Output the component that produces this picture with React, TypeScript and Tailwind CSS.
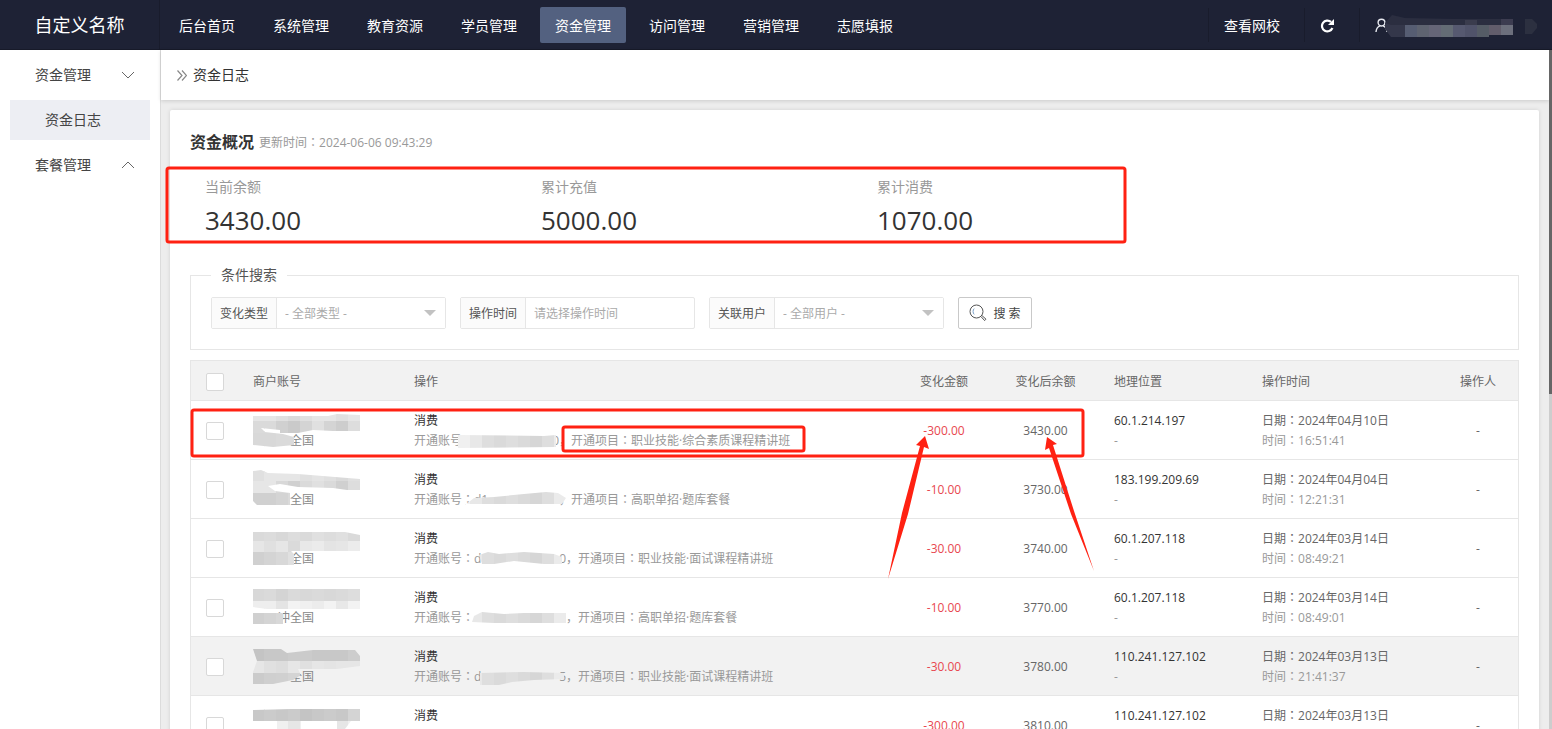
import { useState } from "react";

interface Band {
    y: number;
    h: number;
    colors: string[];
}

interface LogRow {
    id: number;
    name: string;
    head: string;
    tail: string;
    project: string;
    wide: boolean;
    amount: string;
    balance: string;
    ip: string;
    date: string;
    time: string;
    active?: boolean;
    shape: string;
    bands: Band[];
    accountShape: string;
}

const NAV_ITEMS = ["后台首页", "系统管理", "教育资源", "学员管理", "资金管理", "访问管理", "营销管理", "志愿填报"];

const STATS = [
    { label: "当前余额", value: "3430.00" },
    { label: "累计充值", value: "5000.00" },
    { label: "累计消费", value: "1070.00" },
];

const ROWS: LogRow[] = [
    {
        id: 1,
        name: "全国",
        head: "",
        tail: "0",
        project: "职业技能·综合素质课程精讲班",
        wide: false,
        amount: "-300.00",
        balance: "3430.00",
        ip: "60.1.214.197",
        date: "2024年04月10日",
        time: "16:51:41",
        shape: "M0 5L40 5L75 5L84 3L107 4V20L80 20L60 19L45 22L27 22V19L8 17L12 21L30 23L41 26V34L20 36L0 34Z",
        bands: [
            { y: 0, h: 10, colors: ["#e6e6e6", "#e6e6e6", "#e0e0e0", "#dadada", "#e0e0e0", "#e6e6e6", "#e6e6e6", "#e0e0e0", "#e6e6e6"] },
            { y: 10, h: 12, colors: ["#dadada", "#dadada", "#d0d0d0", "#cacaca", "#d4d4d4", "#e0e0e0", "#d4d4d4", "#cdcdcd", "#dddddd"] },
            { y: 22, h: 14, colors: ["#d8d8d8", "#d8d8d8", "#dadada", "#dadada"] },
        ],
        accountShape: "M-16 4L70 5L82 4V16L-16 17Z",
    },
    {
        id: 2,
        name: "全国",
        head: "d1",
        tail: "",
        project: "高职单招·题库套餐",
        wide: false,
        amount: "-10.00",
        balance: "3730.00",
        ip: "183.199.209.69",
        date: "2024年04月04日",
        time: "12:21:31",
        shape: "M0 1L8 0L15 3L45 4L107 9V20L94 20L80 18L45 17L27 14L15 16L22 21L37 23V35H4L0 31Z",
        bands: [
            { y: 0, h: 11, colors: ["#e0e0e0", "#e6e6e6", "#e6e6e6", "#e6e6e6", "#e0e0e0", "#e4e4e4", "#e0e0e0", "#dadada", "#e0e0e0"] },
            { y: 11, h: 12, colors: ["#e6e6e6", "#e6e6e6", "#d8d8d8", "#d0d0d0", "#dadada", "#e0e0e0", "#dadada", "#d0d0d0", "#dddddd"] },
            { y: 23, h: 13, colors: ["#d0d0d0", "#d0d0d0", "#d4d4d4", "#dadada"] },
        ],
        accountShape: "M-9 15L0 8L20 7L50 4L72 2L84 3L92 8L88 14H-9Z",
    },
    {
        id: 3,
        name: "全国",
        head: "d",
        tail: "0",
        project: "职业技能·面试课程精讲班",
        wide: true,
        amount: "-30.00",
        balance: "3740.00",
        ip: "60.1.207.118",
        date: "2024年03月14日",
        time: "08:49:21",
        shape: "M0 3H92L107 6V22H38L41 25V36H0Z",
        bands: [
            { y: 0, h: 12, colors: ["#dadada", "#dcdcdc", "#d8d8d8", "#dddddd", "#dadada", "#e0e0e0", "#dddddd", "#e0e0e0", "#dadada"] },
            { y: 12, h: 11, colors: ["#e6e6e6", "#e0e0e0", "#e6e6e6", "#dadada", "#e8e8e8", "#ebebeb", "#e4e4e4", "#e6e6e6", "#ececec"] },
            { y: 23, h: 14, colors: ["#d0d0d0", "#d4d4d4", "#d8d8d8", "#e0e0e0"] },
        ],
        accountShape: "M5 6L14 3L25 5L50 3L80 5L88 8V15H70L40 12L20 15H8Z",
    },
    {
        id: 4,
        name: "冲全国",
        head: "",
        tail: "",
        project: "高职单招·题库套餐",
        wide: true,
        amount: "-10.00",
        balance: "3770.00",
        ip: "60.1.207.118",
        date: "2024年03月14日",
        time: "08:49:01",
        shape: "M0 1H107V21H14L0 19V25H30V36H0Z",
        bands: [
            { y: 0, h: 13, colors: ["#d8d8d8", "#dadada", "#d4d4d4", "#dadada", "#d8d8d8", "#dadada", "#d8d8d8", "#dadada", "#dddddd"] },
            { y: 13, h: 9, colors: ["#eeeeee", "#eeeeee", "#e4e4e4", "#f3f3f3", "#f0f0f0", "#ececec", "#f3f3f3", "#e8e8e8", "#f3f3f3"] },
            { y: 22, h: 15, colors: ["#d0d0d0", "#d4d4d4", "#d8d8d8"] },
        ],
        accountShape: "M0 8L8 4L30 6L50 5H92V15H20L-2 14Z",
    },
    {
        id: 5,
        name: "全国",
        head: "d",
        tail: "5",
        project: "职业技能·面试课程精讲班",
        wide: true,
        amount: "-30.00",
        balance: "3780.00",
        ip: "110.241.127.102",
        date: "2024年03月13日",
        time: "21:41:37",
        active: true,
        shape: "M0 2H28L34 6L60 3H102L107 9V19L84 22L45 22L48 28L40 33L20 37H0V25L4 14Z",
        bands: [
            { y: 0, h: 14, colors: ["#c4c4c4", "#c8c8c8", "#c8c8c8", "#cbcbcb", "#cbcbcb", "#c8c8c8", "#c8c8c8", "#c8c8c8", "#cdcdcd"] },
            { y: 14, h: 12, colors: ["#e6e6e6", "#e0e0e0", "#dddddd", "#e6e6e6", "#e0e0e0", "#e6e6e6", "#e4e4e4", "#e6e6e6", "#e6e6e6"] },
            { y: 26, h: 12, colors: ["#cbcbcb", "#cfcfcf", "#d0d0d0", "#d4d4d4"] },
        ],
        accountShape: "M6 6L50 5L90 6V12L60 13L38 15L25 18H6Z",
    },
    {
        id: 6,
        name: "全国",
        head: "",
        tail: "",
        project: "高职单招·题库套餐",
        wide: true,
        amount: "-300.00",
        balance: "3810.00",
        ip: "110.241.127.102",
        date: "2024年03月13日",
        time: "21:39:08",
        shape: "M0 4L38 3H107V15H98L92 23H84V15H48V23H24V15H0Z",
        bands: [
            { y: 0, h: 15, colors: ["#c8c8c8", "#cbcbcb", "#c8c8c8", "#cbcbcb", "#c4c4c4", "#c8c8c8", "#cbcbcb", "#c8c8c8", "#d4d4d4"] },
            { y: 15, h: 10, colors: ["#f0f0f0", "#f0f0f0", "#f0f0f0", "#e6e6e6", "#f0f0f0", "#f0f0f0", "#f0f0f0", "#e6e6e6", "#f0f0f0"] },
        ],
        accountShape: "M0 5H90V15H0Z",
    },
];

// full-width colon sits in the middle of its box
function Colon() {
    return <span className="font-['Noto_Sans_CJK_TC',sans-serif] leading-none">：</span>;
}

function RefreshIcon() {
    return (
        <svg width="15" height="15" viewBox="0 0 15 15" fill="none">
            <path d="M12.4 10A5.4 5.4 0 1 1 11 3.9" stroke="#fff" strokeWidth="2.2" />
            <path d="M14 1V7H8Z" fill="#fff" />
        </svg>
    );
}

function UserIcon() {
    return (
        <svg width="14" height="15" viewBox="0 0 14 15" fill="none" stroke="#e8eaf0" strokeWidth="1.4">
            <circle cx="6.5" cy="4.6" r="3.4" />
            <path d="M1 14C1.2 10.8 2.8 8.6 5 7.8M8 7.8C10.2 8.6 11.8 10.8 12 14" />
        </svg>
    );
}

function SearchIcon() {
    return (
        <svg width="18" height="18" viewBox="0 0 18 18" fill="none" stroke="#555" strokeWidth="1">
            <circle cx="7.5" cy="7.5" r="6.5" />
            <path d="M5.2 4.6C3.7 6 3.7 9 5.2 10.4" stroke="#7aa0c8" />
            <path d="M12 12.6L15.6 16.6L17 15.2L13 11.6" />
        </svg>
    );
}

function Chevron({ up }: { up?: boolean }) {
    return (
        <svg width="14" height="8" viewBox="0 0 14 8" fill="none" stroke="#666" strokeWidth="1">
            <path d={up ? "M1 7L7 1L13 7" : "M1 1L7 7L13 1"} />
        </svg>
    );
}

function UserMosaic() {
    const colors = ["#565d72", "#5e6370", "#656577", "#646c75", "#565970", "#50536a", "#555c66", "#625d6b", "#6c6f7c"];
    return (
        <svg width="152" height="22" viewBox="0 0 152 22">
            <path d="M0 8L7 0L20 3L70 4H128V10H10L6 20L0 13Z" fill="#2b2e40" />
            <path d="M0 8L6 10H20V22H6L0 14Z" fill="#34374a" />
            {colors.map((color, i) => (
                <rect key={i} x={20 + i * 12} y={10} width={12} height={i > 6 ? 10 : 12} fill={color} />
            ))}
            <rect x="80" y="5" width="12" height="5" fill="#3a3c4d" />
            <rect x="116" y="4" width="12" height="6" fill="#3c3c50" />
            <path d="M140 4H147L152 9V13L147 19H140Z" fill="#2c3040" />
        </svg>
    );
}

function NameMosaic({ row }: { row: LogRow }) {
    return (
        <svg className="absolute left-0 top-0" width="107" height="40" viewBox="0 0 107 40">
            <clipPath id={`name-${row.id}`}>
                <path d={row.shape} />
            </clipPath>
            <g clipPath={`url(#name-${row.id})`}>
                {row.bands.map((band) =>
                    band.colors.map((color, i) => (
                        <rect key={`${band.y}-${i}`} x={i === 0 ? 0 : i * 12 - 1} y={band.y} width={12} height={band.h} fill={color} />
                    ))
                )}
            </g>
        </svg>
    );
}

function AccountMosaic({ row }: { row: LogRow }) {
    const shades = ["#f0f0f0", "#e8e8e8", "#dedede", "#dadada", "#dedede", "#dadada", "#d6d6d6", "#dedede", "#ebebeb"];
    return (
        <svg className="absolute left-0 top-0 overflow-visible" width="92" height="20" viewBox="0 0 92 20">
            <clipPath id={`account-${row.id}`}>
                <path d={row.accountShape} />
            </clipPath>
            <g clipPath={`url(#account-${row.id})`}>
                {shades.map((color, i) => (
                    <rect key={i} x={-16 + i * 12} y={0} width={i === 8 ? 14 : 12} height={20} fill={color} />
                ))}
            </g>
        </svg>
    );
}

function SelectField({ id, label, option }: { id: string; label: string; option: string }) {
    return (
        <div className="flex h-8 w-[235px] rounded-xs border border-[#e6e6e6]">
            <label htmlFor={id} className="flex w-[65px] items-center justify-center border-r border-[#e6e6e6] bg-[#fbfbfb] pt-0.5 text-[#555]">
                {label}
            </label>
            <div className="relative flex-1">
                <select id={id} className="h-full w-full appearance-none bg-white pl-2 pt-0.5 text-[#aaa] outline-none">
                    <option>{option}</option>
                </select>
                <svg className="pointer-events-none absolute right-[9px] top-3" width="12" height="6" viewBox="0 0 12 6">
                    <path d="M0 0H12L6 6Z" fill="#c2c2c2" />
                </svg>
            </div>
        </div>
    );
}

function Annotations() {
    return (
        <svg className="pointer-events-none absolute left-0 top-0" width="1140" height="600" viewBox="0 0 1140 600">
            <g fill="none" stroke="#ff2112" strokeWidth="3">
                <rect x="167" y="168" width="958" height="74" rx="2" />
                <rect x="192" y="410" width="891" height="46" rx="2" />
                <rect x="563" y="427" width="241" height="24" rx="2" />
            </g>
            <g fill="#ff2112">
                <path d="M925 436L929 449L924 447L908 514L888 579L902 513L920 446L916 445Z" />
                <path d="M1047 437L1045 450L1049 448L1071 514L1094 571L1074 511L1053 445L1057 444Z" />
            </g>
        </svg>
    );
}

export default function App() {
    const [checked, setChecked] = useState<number[]>([]);

    const toggle = (id: number) => {
        setChecked((prev) => (prev.includes(id) ? prev.filter((item) => item !== id) : [...prev, id]));
    };

    const toggleAll = () => {
        setChecked(checked.length === ROWS.length ? [] : ROWS.map((row) => row.id));
    };

    const boxClass = "block h-[18px] w-[18px] appearance-none rounded-xs border border-[#d8d8d8] bg-white checked:bg-[#536180]";

    return (
        <div className="relative flex h-screen flex-col overflow-hidden bg-[#ededed] font-['Open_Sans','Noto_Sans_CJK_SC',sans-serif] text-xs text-[#666]">
            {/* TOP BAR */}
            <header className="flex h-[50px] shrink-0 items-center border-b border-[#171a29] bg-[#1e2235] text-sm text-white">
                <div className="flex h-full w-40 shrink-0 items-center justify-center border-r border-[#191c2c] text-lg">自定义名称</div>
                <nav className="flex gap-2 pl-1">
                    {NAV_ITEMS.map((item) => (
                        <a
                            key={item}
                            href="#"
                            className={`flex h-9 w-[86px] items-center justify-center rounded-xs pt-0.5 ${item === "资金管理" ? "bg-[#536180]" : ""}`}
                        >
                            {item}
                        </a>
                    ))}
                </nav>
                <div className="ml-auto flex h-[34px] items-center">
                    <a href="#" className="flex h-full items-center border-l border-[#191c2c] pl-[15px] pr-6 pt-0.5">查看网校</a>
                    <button aria-label="刷新" className="flex h-full items-center border-l border-[#191c2c] pl-[15px] pr-6 pt-0.5">
                        <RefreshIcon />
                    </button>
                    <button aria-label="用户" className="flex h-full w-[193px] items-center border-l border-[#191c2c] pl-[15px] pt-0.5">
                        <UserIcon />
                        <span className="-ml-1">
                            <UserMosaic />
                        </span>
                    </button>
                </div>
            </header>

            <div className="flex min-h-0 flex-1">
                {/* SIDEBAR */}
                <aside className="w-[161px] shrink-0 border-r border-[#dcdcdc] bg-white text-sm text-[#444]">
                    <a href="#" className="flex h-[50px] items-center justify-between pl-[35px] pr-[25px]">
                        资金管理
                        <Chevron />
                    </a>
                    <a href="#" className="mx-[10px] flex h-10 items-center bg-[#edeef3] pl-[35px]">资金日志</a>
                    <a href="#" className="flex h-[50px] items-center justify-between pl-[35px] pr-[25px]">
                        套餐管理
                        <Chevron up />
                    </a>
                </aside>

                <div className="flex min-w-0 flex-1 flex-col">
                    <div className="flex h-[50px] shrink-0 items-center gap-[6px] bg-white pl-4 text-sm text-[#333] shadow-[0_1px_4px_rgba(0,0,0,0.15)]">
                        <svg width="10" height="11" viewBox="0 0 10 11" fill="none" stroke="#888" strokeWidth="1.2">
                            <path d="M0.5 0.5L5 5.5L0.5 10.5M5 0.5L9.5 5.5L5 10.5" />
                        </svg>
                        资金日志
                    </div>

                    <main className="min-h-0 flex-1 overflow-hidden pl-[9px] pr-[10px] pt-[10px]">
                        <div className="rounded-xs bg-white p-5 shadow-[0_0_4px_rgba(0,0,0,0.12)]">
                            <div className="flex h-6 items-center gap-[5px]">
                                <h1 className="text-base font-bold text-[#333]">资金概况</h1>
                                <span className="pt-0.5 text-[#999]">更新时间<Colon />2024-06-06 09:43:29</span>
                            </div>

                            {/* STATS */}
                            <div className="mt-[23px] grid grid-cols-4 gap-[15px]">
                                {STATS.map((stat) => (
                                    <div key={stat.label} className="pl-[15px]">
                                        <div className="text-sm text-[#999]">{stat.label}</div>
                                        <div className="mb-0.5 mt-1 text-[26px] leading-[38px] text-[#333]">{stat.value}</div>
                                    </div>
                                ))}
                            </div>

                            {/* FILTERS */}
                            <fieldset className="mt-6 border border-[#e6e6e6] px-5 pb-5 pt-3">
                                <legend className="px-[10px] text-sm text-[#555]">条件搜索</legend>
                                <form className="flex gap-[14px]" onSubmit={(e) => e.preventDefault()}>
                                    <SelectField id="change-type" label="变化类型" option="- 全部类型 -" />
                                    <div className="flex h-8 w-[235px] rounded-xs border border-[#e6e6e6]">
                                        <label htmlFor="time" className="flex w-[65px] items-center justify-center border-r border-[#e6e6e6] bg-[#fbfbfb] pt-0.5 text-[#555]">
                                            操作时间
                                        </label>
                                        <input id="time" type="text" placeholder="请选择操作时间" className="min-w-0 flex-1 pl-2 pt-0.5 outline-none placeholder:text-[#aaa]" />
                                    </div>
                                    <SelectField id="user" label="关联用户" option="- 全部用户 -" />
                                    <button className="flex h-8 w-[74px] items-center justify-center gap-[6px] rounded-xs border border-[#c9c9c9] text-[#444]">
                                        <SearchIcon />
                                        <span className="pt-0.5">搜 索</span>
                                    </button>
                                </form>
                            </fieldset>

                            {/* LOG TABLE */}
                            <table className="mt-[10px] w-full table-fixed border-separate border-spacing-0 border-x border-t border-[#e6e6e6] text-left leading-5">
                                <thead>
                                    <tr className="h-10 bg-[#f2f2f2] [&>th]:border-b [&>th]:border-[#e6e6e6] [&>th]:pt-0.5 [&>th]:font-normal">
                                        <th className="w-[47px] pl-[15px]">
                                            <input type="checkbox" aria-label="全选" className={boxClass} checked={checked.length === ROWS.length} onChange={toggleAll} />
                                        </th>
                                        <th className="w-[161px] pl-[15px]">商户账号</th>
                                        <th className="pl-[15px]">操作</th>
                                        <th className="w-[96px] text-center">变化金额</th>
                                        <th className="w-[107px] text-center">变化后余额</th>
                                        <th className="w-[148px] pl-[15px]">地理位置</th>
                                        <th className="w-[191px] pl-[15px]">操作时间</th>
                                        <th className="w-20 text-center">操作人</th>
                                    </tr>
                                </thead>
                                <tbody>
                                    {ROWS.map((row) => (
                                        <tr key={row.id} className={`h-[59px] [&>td]:border-b [&>td]:border-[#e6e6e6] [&>td]:pt-0.5 ${row.active ? "bg-[#f2f2f2]" : ""}`}>
                                            <td className="pl-[15px]">
                                                <input type="checkbox" aria-label={`选择第${row.id}行`} className={boxClass} checked={checked.includes(row.id)} onChange={() => toggle(row.id)} />
                                            </td>
                                            <td className="pl-[15px]">
                                                <div className="relative h-10 w-[107px] pr-[46px] pt-5 text-right text-[#888]">
                                                    {row.name}
                                                    <NameMosaic row={row} />
                                                </div>
                                            </td>
                                            <td className="whitespace-nowrap pl-[15px]">
                                                <div className="text-[#333]">消费</div>
                                                <div className="flex text-[#999]">
                                                    <span>开通账号<Colon /></span>
                                                    <span className={`relative flex justify-between ${row.wide ? "w-[92px]" : "w-[85px]"}`}>
                                                        <span>{row.head}</span>
                                                        <span>{row.tail}</span>
                                                        <AccountMosaic row={row} />
                                                    </span>
                                                    <span>，开通项目<Colon />{row.project}</span>
                                                </div>
                                            </td>
                                            <td className="text-center text-[#e8474f]">{row.amount}</td>
                                            <td className="text-center">{row.balance}</td>
                                            <td className="pl-[15px]">
                                                <div className="text-[#333]">{row.ip}</div>
                                                <div className="text-[#999]">-</div>
                                            </td>
                                            <td className="pl-[15px]">
                                                <div>日期<Colon />{row.date}</div>
                                                <div className="text-[#999]">时间<Colon />{row.time}</div>
                                            </td>
                                            <td className="text-center">-</td>
                                        </tr>
                                    ))}
                                </tbody>
                            </table>
                        </div>
                    </main>
                </div>

                {/* SCROLLBAR */}
                <div className="w-[3px] shrink-0 bg-[#cdcdcd]">
                    <div className="h-[344px] bg-[#666]" />
                </div>
            </div>

            <Annotations />
        </div>
    );
}
